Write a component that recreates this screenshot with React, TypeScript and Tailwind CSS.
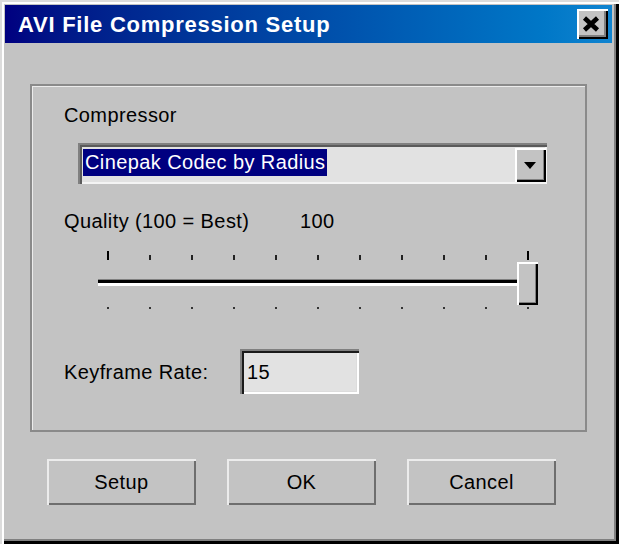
import React from "react";

const ticks = Array.from({ length: 11 }, (_, i) => i);

const Button = ({ children }: { children: React.ReactNode }) => (
  <button className="w-[149px] h-[46px] bg-[#c3c3c3] text-[20px] tracking-[0.4px] text-black shadow-[inset_2px_2px_0_#ececec,inset_-2px_-2px_0_#6e6e6e]">
    {children}
  </button>
);

export default function App() {
  return (
    <div
      className="w-[619px] h-[544px] bg-[#c3c3c3] flex flex-col pt-[5px] pl-[5px] pr-[7px] shadow-[inset_2px_2px_0_#dcdcdc,inset_4px_4px_0_#ffffff,inset_-3px_-3px_0_#000000,inset_-5px_-5px_0_#808080]"
      style={{ fontFamily: '"Liberation Sans", Arial, sans-serif' }}
    >
      {/* title bar */}
      <div className="h-[38px] flex items-center justify-between pl-[13px] pr-[4px] bg-gradient-to-r from-[#000080] to-[#1084d0]">
        <span className="text-white font-bold text-[22px] tracking-[0.75px]">
          AVI File Compression Setup
        </span>
        <button className="w-[31px] h-[30px] bg-[#c3c3c3] flex items-center justify-center pr-[3px] shadow-[inset_2px_2px_0_#ffffff,inset_-2px_-2px_0_#000000,inset_-4px_-4px_0_#808080]">
          <svg width="18" height="16" viewBox="0 0 18 16">
            <path d="M2.5 2 L15.5 14 M15.5 2 L2.5 14" stroke="#000" strokeWidth="4.5" />
          </svg>
        </button>
      </div>

      {/* group box */}
      <div className="mt-[41px] ml-[25px] w-[557px] h-[348px] border-2 border-[#8a8a8a] shadow-[inset_1px_1px_0_#ececec] flex flex-col pt-[17px] pl-[32px] text-[20px] tracking-[0.4px] text-black">
        <div className="leading-[24px] h-[24px]">Compressor</div>

        <div className="mt-[16px] ml-[14px] w-[469px] h-[41px] bg-[#e2e2e2] flex items-start pt-[5px] pl-[5px] pr-[1px] shadow-[inset_2px_2px_0_#808080,inset_4px_4px_0_#5a5a5a,inset_-2px_-2px_0_#f4f4f4]">
          <div className="mt-[1px] h-[27px] bg-[#000080] text-white leading-[27px] px-[2px]">
            Cinepak Codec by Radius
          </div>
          <div className="ml-auto w-[31px] h-[34px] bg-[#c3c3c3] flex items-center justify-center pr-[2px] shadow-[inset_2px_2px_0_#ffffff,inset_-2px_-2px_0_#000000,inset_-3px_-3px_0_#808080]">
            <div className="w-0 h-0 border-l-[6px] border-r-[6px] border-t-[7px] border-l-transparent border-r-transparent border-t-black" />
          </div>
        </div>

        <div className="mt-[25px] h-[24px] leading-[24px] flex">
          <span className="w-[236px]">Quality (100 = Best)</span>
          <span>100</span>
        </div>

        {/* slider */}
        <div className="relative mt-[17px] ml-[31px] w-[450px] h-[60px] flex flex-col">
          <div className="ml-[12px] w-[422px] h-[10px] flex justify-between items-end">
            {ticks.map((t) => (
              <div
                key={t}
                className={t === 0 || t === 10 ? "w-[2px] h-[9px] bg-black" : "w-[2px] h-[5px] bg-[#222]"}
              />
            ))}
          </div>
          <div className="mt-[19px] ml-[3px] w-[438px] h-[7px] flex flex-col">
            <div className="h-[1px] bg-[#808080]" />
            <div className="h-[3px] bg-black" />
            <div className="h-[3px] bg-white" />
          </div>
          <div className="mt-[21px] ml-[12px] w-[422px] h-[2px] flex justify-between">
            {ticks.map((t) => (
              <div key={t} className="w-[2px] h-[2px] bg-[#333]" />
            ))}
          </div>
          <div className="absolute left-[422px] top-[12px] w-[21px] h-[43px] bg-[#c3c3c3] shadow-[inset_2px_2px_0_#ffffff,inset_-2px_-2px_0_#000000,inset_-3px_-3px_0_#808080]" />
        </div>

        <div className="mt-[39px] flex items-center">
          <span className="w-[176px]">Keyframe Rate:</span>
          <div className="w-[119px] h-[45px] bg-[#e2e2e2] flex items-center pl-[7px] shadow-[inset_2px_2px_0_#808080,inset_4px_4px_0_#1a1a1a,inset_-2px_-2px_0_#ffffff,inset_-3px_-3px_0_#dcdcdc]">
            15
          </div>
        </div>
      </div>

      {/* buttons */}
      <div className="mt-[27px] ml-[42px] flex gap-[31px]">
        <Button>Setup</Button>
        <Button>OK</Button>
        <Button>Cancel</Button>
      </div>
    </div>
  );
}
